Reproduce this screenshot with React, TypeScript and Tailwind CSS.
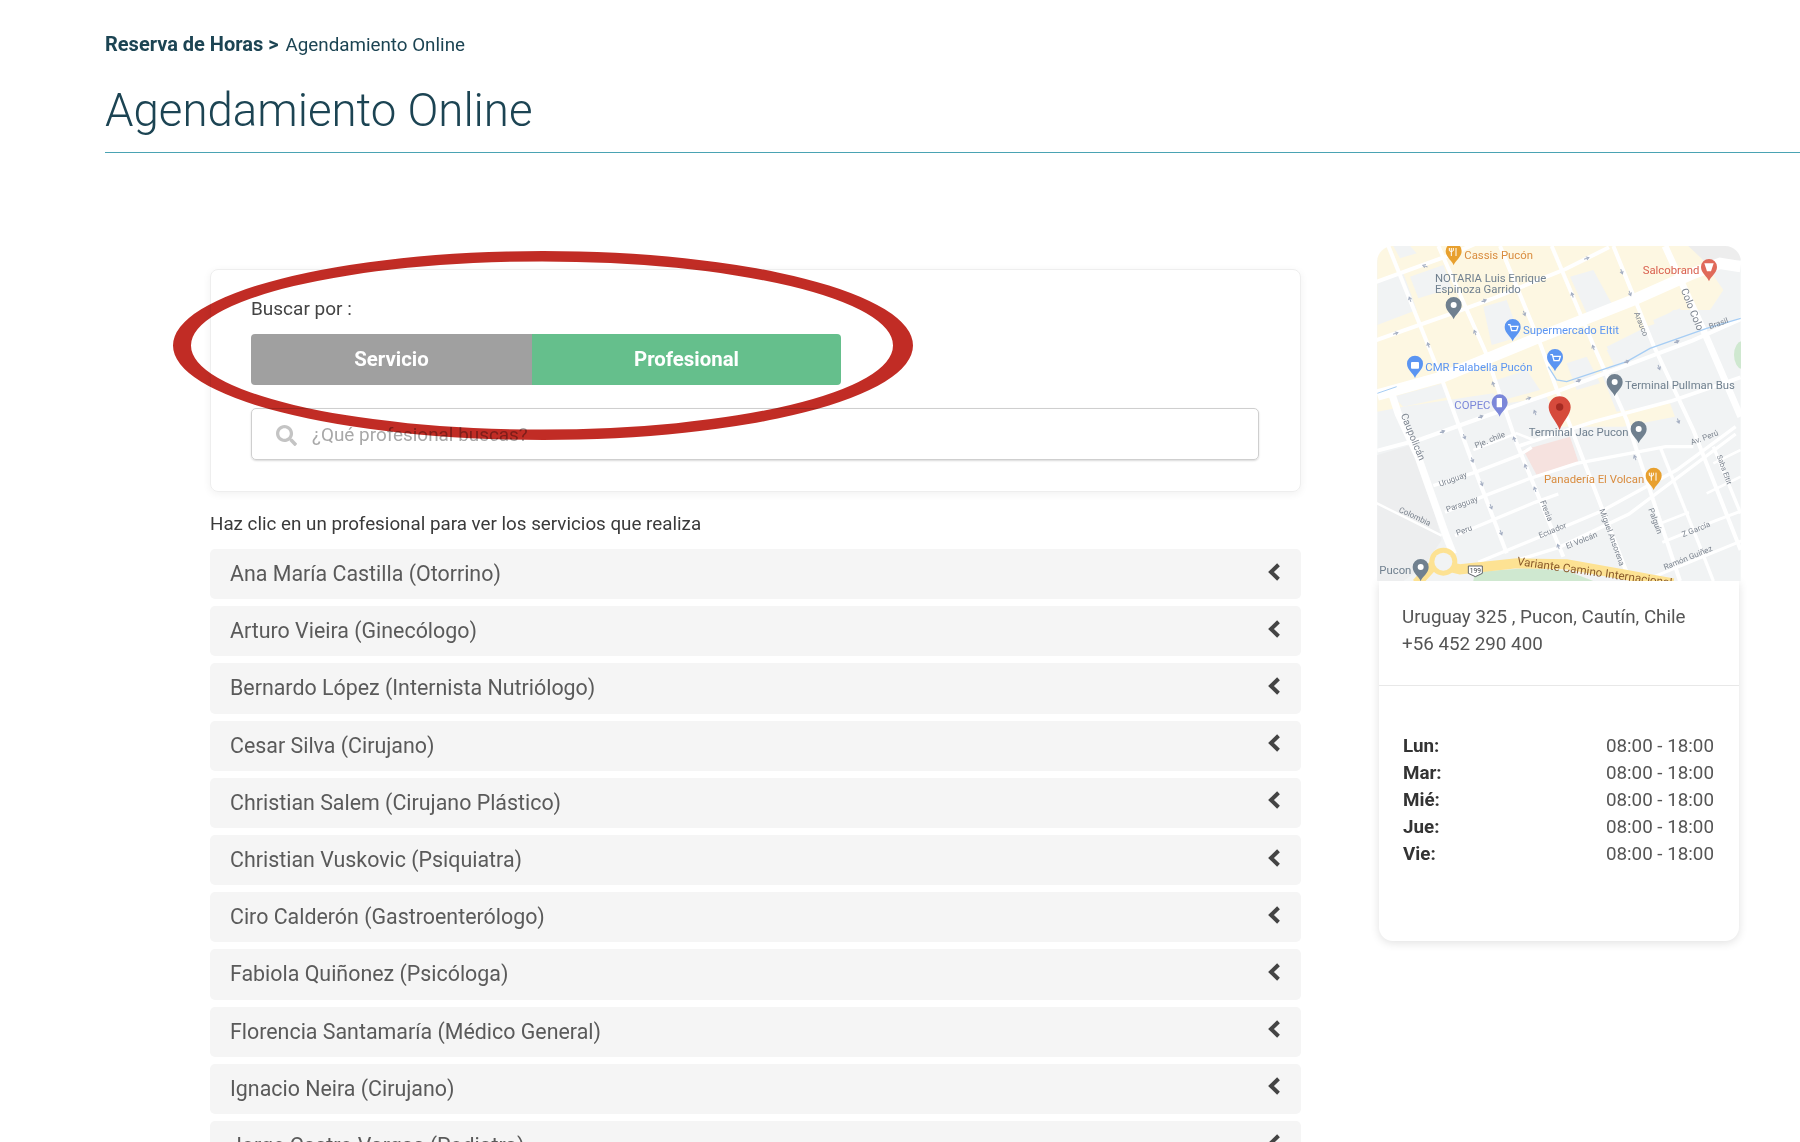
import React from "react";
import { FaSearch } from "react-icons/fa";

const people = [
  "Ana María Castilla (Otorrino)",
  "Arturo Vieira (Ginecólogo)",
  "Bernardo López (Internista Nutriólogo)",
  "Cesar Silva (Cirujano)",
  "Christian Salem (Cirujano Plástico)",
  "Christian Vuskovic (Psiquiatra)",
  "Ciro Calderón (Gastroenterólogo)",
  "Fabiola Quiñonez (Psicóloga)",
  "Florencia Santamaría (Médico General)",
  "Ignacio Neira (Cirujano)",
  "Jorge Castro Vargas (Podiatra)",
];

const days = ["Lun:", "Mar:", "Mié:", "Jue:", "Vie:"];

const roads: [string, number][] = [
  ["85,48 250,460 345,720 440,970", 12],
  ["235,48 375,362 470,640 610,980", 12],
  ["420,48 540,340 620,560 810,1053", 12],
  ["575,48 700,345 800,570 960,1053", 12],
  ["760,48 880,345 1000,600 1142,960", 12],
  ["915,48 1030,300 1142,560", 20],
  ["900,650 1020,950 1060,1053", 10],
  ["1060,650 1142,850", 10],
  ["45,157 265,77 345,42", 12],
  ["45,332 285,247 395,207 617,117 747,52", 12],
  ["52,662 185,627 395,552 597,482 997,332 1142,268", 12],
  ["470,650 700,575 937,512 1142,442", 11],
  ["340,660 470,610 520,630", 8],
  ["220,767 345,727 475,677 515,652", 10],
  ["255,847 375,797 505,747 650,700 917,650 1000,650", 10],
  ["285,917 525,817 595,792", 10],
  ["355,997 597,897 727,842 950,720 1127,590", 10],
  ["440,1000 597,952 807,852 1127,612", 10],
  ["907,937 1067,872 1147,842", 9],
  ["897,882 987,847", 8],
  ["877,1042 1147,932", 9],
  ["1040,790 1142,740", 8],
  ["1060,700 1142,660", 8],
  ["95,490 115,552 175,682 260,922 280,972", 22],
  ["45,817 245,917", 7],
];

const arrows: [number, number, number][] = [
  [195, 108, 200], [372, 212, -20], [107, 310, -20], [150, 208, -110], [205, 345, -110],
  [345, 308, -110], [400, 463, -110], [463, 628, -110], [497, 710, -110], [525, 778, -110],
  [247, 605, -20], [362, 560, -20], [313, 620, 70], [337, 690, 70], [365, 760, 70],
  [393, 830, 70], [423, 908, 70], [505, 505, -20], [525, 548, -110], [493, 250, 70],
  [637, 195, -110], [680, 85, -20], [785, 125, 70], [810, 190, 70], [700, 353, -110],
  [800, 395, -20], [655, 452, -20], [950, 335, -20], [897, 412, 70], [955, 573, 70],
  [825, 683, -110], [595, 950, -110],
];

function Pin({ x, y, c, s = 1, dot = "#fff" }: { x: number; y: number; c: string; s?: number; dot?: string }) {
  return (
    <g transform={`translate(${x} ${y}) scale(${s})`}>
      <path d="M0 36C-4 22-24 12-24 -7A24 24 0 1 1 24 -7C24 12 4 22 0 36Z" fill={c} />
      <circle cx={0} cy={-7} r={9} fill={dot} />
    </g>
  );
}

function MapLabel({ x, y, c, children, size = 34, anchor = "start", rot }: { x: number; y: number; c: string; children: React.ReactNode; size?: number; anchor?: "start" | "middle" | "end"; rot?: number }) {
  return (
    <text
      x={x}
      y={y}
      fill={c}
      fontSize={size}
      textAnchor={anchor}
      fontFamily="Roboto, sans-serif"
      transform={rot !== undefined ? `rotate(${rot} ${x} ${y})` : undefined}
    >
      {children}
    </text>
  );
}

function MapDrawing() {
  const gray = "#70808f";
  const blue = "#5b95f2";
  const orange = "#e8a02e";
  const orangeT = "#d98c3f";
  const street = "#7d8590";
  return (
    <svg viewBox="52 48 1090 1005" className="block h-[335px] w-[364px] blur-[0.4px]">
      <rect x="52" y="48" width="1090" height="1005" fill="#f1f3f4" />
      <polygon fill="#edeeef" points="52,675 170,640 245,930 190,1010 130,1053 52,1053" />
      <polygon
        fill="#fdf7e2"
        points="52,48 1000,48 1090,180 1050,240 940,240 890,280 860,290 740,350 770,400 720,420 770,545 930,520 945,560 790,590 670,590 600,590 560,500 510,510 440,520 450,570 400,490 130,530 52,545"
      />
      <polygon fill="#f1f3f4" points="52,150 130,130 170,240 52,285" />
      <polygon fill="#f1f3f4" points="100,48 150,48 170,70 120,85" />
      <polygon fill="#f1f3f4" points="150,140 250,105 275,175 175,205" />
      <polygon fill="#f1f3f4" points="370,230 440,210 480,320 395,345" />
      <polygon fill="#f1f3f4" points="630,140 700,120 760,230 680,250" />
      <polygon fill="#f1f3f4" points="880,270 960,235 1000,300 900,335" />
      <polygon fill="#f1f3f4" points="740,360 880,320 900,380 770,420" />
      <polygon fill="#f1f3f4" points="410,450 500,420 540,480 430,510" />
      <polygon fill="#f1f3f4" points="620,400 680,380 720,460 650,480" />
      <polygon fill="#f1f3f4" points="100,500 250,460 270,500 130,530" />
      <polygon fill="#ededed" points="985,48 1142,48 1142,90 1040,100" />
      <polygon fill="#f6e2df" points="490,660 630,620 655,695 530,735" />
      <ellipse cx="1148" cy="375" rx="26" ry="42" fill="#cfe8d0" />
      <polygon fill="#cfe8d0" points="340,1053 345,1025 500,1015 620,1022 700,1053" />
      {roads.map(([p, w], i) => (
        <polyline key={i} points={p} fill="none" stroke="#fff" strokeWidth={w} />
      ))}
      <polyline points="52,495 250,440 530,325 820,210 1000,130 1080,100 1142,110" fill="none" stroke="#fff" strokeWidth={34} />
      <polyline points="52,490 110,470" fill="none" stroke="#a6cdf4" strokeWidth={3} />
      <polyline points="565,410 590,450 620,455 800,395 870,355 1040,295 1142,265" fill="none" stroke="#a6cdf4" strokeWidth={4} />
      {arrows.map(([x, y, r], i) => (
        <path key={i} transform={`translate(${x} ${y}) rotate(${r})`} d="M-8 0H4M-1-5 7 0-1 5" fill="none" stroke="#a4aec2" strokeWidth={3} />
      ))}
      <polyline points="170,1060 225,1000 300,1018 470,1000 620,1003 800,1035 940,1060" fill="none" stroke="#fde293" strokeWidth={30} />
      <circle cx="250" cy="995" r="42" fill="#fde293" />
      <circle cx="250" cy="995" r="27" fill="#f1f3f4" />
      <g>
        <path d="M325 1008H367V1030L346 1040 325 1030Z" fill="#fff" stroke="#5f6368" strokeWidth={3} />
        <MapLabel x={346} y={1029} c="#3c4043" size={20} anchor="middle">199</MapLabel>
      </g>
      <MapLabel x={470} y={1005} c="#8a5a2a" size={35} rot={8}>Variante Camino Internacional</MapLabel>

      <MapLabel x={313} y={87} c={orangeT}>Cassis Pucón</MapLabel>
      <Pin x={281} y={70} c={orange} dot={orange} />
      <path d="M274 54V78M288 54V78M268 54V62Q274 68 280 62V54" fill="none" stroke="#fff" strokeWidth={3} />

      <MapLabel x={225} y={155} c={gray}>NOTARIA Luis Enrique</MapLabel>
      <MapLabel x={225} y={190} c={gray}>Espinoza Garrido</MapLabel>
      <Pin x={281} y={232} c={gray} />

      <MapLabel x={848} y={133} c="#d9604f">Salcobrand</MapLabel>
      <Pin x={1047} y={118} c="#e06a5a" dot="#e06a5a" />
      <path d="M1033 100H1061L1053 124H1041Z" fill="#fff" />

      <Pin x={458} y={298} c={blue} dot={blue} />
      <path d="M444 284H450L455 302H470L474 289H452" fill="none" stroke="#fff" strokeWidth={4} />
      <MapLabel x={489} y={313} c={blue}>Supermercado Eltit</MapLabel>

      <Pin x={585} y={388} c={blue} dot={blue} />
      <path d="M571 374H577L582 392H597L601 379H579" fill="none" stroke="#fff" strokeWidth={4} />

      <Pin x={165} y={408} c={blue} dot={blue} />
      <rect x="153" y="396" width="24" height="20" rx="3" fill="#fff" />
      <MapLabel x={196} y={422} c={blue}>CMR Falabella Pucón</MapLabel>

      <Pin x={764} y={463} c={gray} />
      <MapLabel x={795} y={478} c={gray}>Terminal Pullman Bus</MapLabel>

      <MapLabel x={283} y={538} c="#7b87d9">COPEC</MapLabel>
      <Pin x={419} y={524} c="#7b87d9" dot="#7b87d9" />
      <rect x="410" y="504" width="16" height="28" rx="2" fill="#fff" />

      <MapLabel x={506} y={618} c={gray}>Terminal Jac Pucon</MapLabel>
      <Pin x={836} y={604} c={gray} />

      <MapLabel x={552} y={759} c={orangeT}>Panadería El Volcan</MapLabel>
      <Pin x={881} y={744} c={orange} dot={orange} />
      <path d="M874 728V752M888 728V752M868 728V736Q874 742 880 736V728" fill="none" stroke="#fff" strokeWidth={3} />

      <MapLabel x={58} y={1033} c={gray}>Pucon</MapLabel>
      <Pin x={182} y={1018} c={gray} />

      <path d="M599 600C590 575 566 555 566 532A33 33 0 1 1 632 532C632 555 608 575 599 600Z" fill="#d64a3c" />
      <circle cx="599" cy="531" r="11" fill="#a52a22" />

      <MapLabel x={122} y={555} c={street} size={30} rot={68}>Caupolicán</MapLabel>
      <MapLabel x={962} y={180} c={street} size={31} rot={68}>Colo Colo</MapLabel>
      <MapLabel x={822} y={250} c={street} size={24} rot={68}>Arauco</MapLabel>
      <MapLabel x={1050} y={298} c={street} size={24} rot={-20}>Brasil</MapLabel>
      <MapLabel x={348} y={655} c={street} size={24} rot={-22}>Pje. chile</MapLabel>
      <MapLabel x={240} y={770} c={street} size={24} rot={-20}>Uruguay</MapLabel>
      <MapLabel x={262} y={847} c={street} size={24} rot={-20}>Paraguay</MapLabel>
      <MapLabel x={292} y={917} c={street} size={24} rot={-20}>Peru</MapLabel>
      <MapLabel x={115} y={845} c={street} size={24} rot={25}>Colombia</MapLabel>
      <MapLabel x={540} y={925} c={street} size={24} rot={-22}>Ecuador</MapLabel>
      <MapLabel x={622} y={957} c={street} size={24} rot={-22}>El Volcán</MapLabel>
      <MapLabel x={540} y={815} c={street} size={24} rot={68}>Fresia</MapLabel>
      <MapLabel x={718} y={840} c={street} size={24} rot={70}>Miguel Ansorena</MapLabel>
      <MapLabel x={865} y={838} c={street} size={24} rot={70}>Palguín</MapLabel>
      <MapLabel x={1070} y={678} c={street} size={22} rot={70}>Saba Eltit</MapLabel>
      <MapLabel x={995} y={645} c={street} size={24} rot={-20}>Av. Perú</MapLabel>
      <MapLabel x={970} y={922} c={street} size={24} rot={-22}>Z García</MapLabel>
      <MapLabel x={915} y={1020} c={street} size={24} rot={-22}>Ramón Guiñez</MapLabel>
    </svg>
  );
}

function Chevron() {
  return (
    <svg viewBox="0 0 12 18" className="mb-[5px] h-[18px] w-[12px] text-[#444]">
      <polyline points="10.5,1.8 3,9 10.5,16.2" fill="none" stroke="currentColor" strokeWidth={4} />
    </svg>
  );
}

export default function App() {
  return (
    <div className="relative h-[1142px] w-[1800px] overflow-hidden bg-white font-['Roboto',sans-serif]">
      <header className="ml-[105px] border-b-[1.5px] border-[#4aa3b3] pb-[14px] pt-[33px] text-[#1c4453]">
        <p className="flex h-[22px] items-baseline gap-[7px] leading-[22px]">
          <span className="text-[20px] font-bold">Reserva de Horas &gt;</span>
          <span className="text-[18.8px]">Agendamiento Online</span>
        </p>
        <h1 className="mt-[29px] text-[45.6px] font-light leading-[54px]">Agendamiento Online</h1>
      </header>

      <main className="flex items-start pl-[210px] pt-[93px]">
        <section className="mt-[23px] w-[1091px]">
          <div className="rounded-[8px] border border-[#eeeeee] px-[40px] pb-[31px] pt-[28px] shadow-[0_2px_8px_rgba(0,0,0,0.06)]">
            <p className="text-[19px] leading-[22px] text-[#444]">Buscar por :</p>
            <div className="mt-[14px] flex h-[51px] w-[590px] overflow-hidden rounded-[4px] text-[20.4px] font-bold text-white">
              <div className="flex w-[281px] items-center justify-center bg-[#a0a0a0]">Servicio</div>
              <div className="flex flex-1 items-center justify-center bg-[#65bf8c]">Profesional</div>
            </div>
            <div className="mt-[23px] flex h-[52px] w-[1008px] items-center rounded-[5px] border border-[#cfcfcf] pl-[24px] pt-[2px] text-[18.9px] text-[#a8a8a8] shadow-[0_1px_2px_rgba(0,0,0,0.15)]">
              <FaSearch className="h-[21px] w-[21px] text-[#c4c4c4]" />
              <span className="ml-[15px]">¿Qué profesional buscas?</span>
            </div>
          </div>

          <p className="mt-[20px] text-[18.8px] leading-[24px] text-[#3a3a3a]">
            Haz clic en un profesional para ver los servicios que realiza
          </p>

          <ul className="mt-[13px] flex flex-col gap-[7px]">
            {people.map((name) => (
              <li
                key={name}
                className="flex h-[50.2px] shrink-0 items-center justify-between rounded-[5px] bg-[#f5f5f5] pl-[20px] pr-[21px] text-[21.4px] text-[#5a5a5a]"
              >
                <span>{name}</span>
                <Chevron />
              </li>
            ))}
          </ul>
        </section>

        <aside className="ml-[76px] w-[364px]">
          <div className="overflow-hidden rounded-t-[16px]">
            <MapDrawing />
          </div>
          <div className="mx-[2px] h-[360px] rounded-b-[14px] bg-white shadow-[0_2px_10px_rgba(0,0,0,0.12)]">
            <div className="h-[105px] border-b border-[#e8e8e8] px-[23px] pt-[23px] text-[18.8px] leading-[27px] text-[#555]">
              <p>Uruguay 325 , Pucon, Cautín, Chile</p>
              <p>+56 452 290 400</p>
            </div>
            <dl className="pl-[24px] pr-[25px] pt-[47px] text-[18.8px] leading-[26.9px]">
              {days.map((d) => (
                <div key={d} className="flex justify-between">
                  <dt className="font-bold text-[#333]">{d}</dt>
                  <dd className="text-[#555]">08:00 - 18:00</dd>
                </div>
              ))}
            </dl>
          </div>
        </aside>
      </main>

      <svg className="absolute left-[173px] top-[251px] h-[189px] w-[740px] mix-blend-multiply" viewBox="0 0 740 189">
        <path
          fillRule="evenodd"
          fill="#c12c25"
          d="M0 94.5A370 94.5 0 1 0 740 94.5A370 94.5 0 1 0 0 94.5ZM18 94.5A351 84 0 1 1 720 94.5A351 84 0 1 1 18 94.5Z"
        />
      </svg>
    </div>
  );
}
